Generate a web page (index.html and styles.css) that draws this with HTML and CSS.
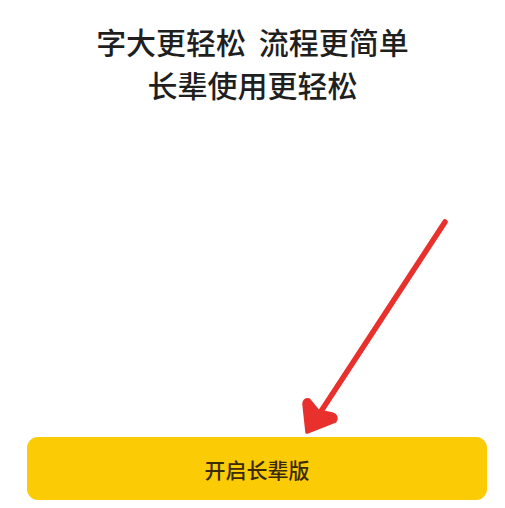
FILE: index.html
```html
<!DOCTYPE html>
<html lang="zh-CN">
<head>
<meta charset="utf-8">
<link rel="stylesheet" href="styles.css">
</head>
<body>
<div class="page">
  <div class="title">
    <div class="line line-1">字大更轻松 流程更简单</div>
    <div class="line">长辈使用更轻松</div>
  </div>
  <button class="cta">开启长辈版</button>
  <svg class="arrow" width="505" height="508" viewBox="0 0 505 508" xmlns="http://www.w3.org/2000/svg">
    <path d="M445 222 L314 422" stroke="#e8302c" stroke-width="5.5" stroke-linecap="round" fill="none"/>
    <path d="M307 432 L304 404 Q304 399 309 400 L318 411 L332 414 Q338 416 335 421 Z" fill="#e8302c" stroke="#e8302c" stroke-width="3.5" stroke-linejoin="round"/>
  </svg>
</div>
</body>
</html>
```
FILE: styles.css
```css
* { box-sizing: border-box; }
html, body { margin: 0; padding: 0; background: #ffffff; }
.page {
  position: relative;
  width: 505px;
  height: 508px;
  display: flex;
  flex-direction: column;
  font-family: "Noto Sans CJK SC", "Noto Sans", sans-serif;
}
.title {
  padding-top: 20px;
  text-align: center;
  color: #1f1f1f;
  font-size: 30px;
  font-weight: 500;
  line-height: 43px;
}
.line-1 { word-spacing: 6px; }
.cta {
  margin: auto 0 8px 27px;
  width: 460px;
  height: 63px;
  border: none;
  border-radius: 11px;
  background: #fbcc05;
  color: #3a2a08;
  font-family: "Noto Sans CJK SC", "Noto Sans", sans-serif;
  font-size: 21px;
  font-weight: 500;
  padding: 0;
}
.arrow {
  position: absolute;
  left: 0;
  top: 0;
  pointer-events: none;
}
```
